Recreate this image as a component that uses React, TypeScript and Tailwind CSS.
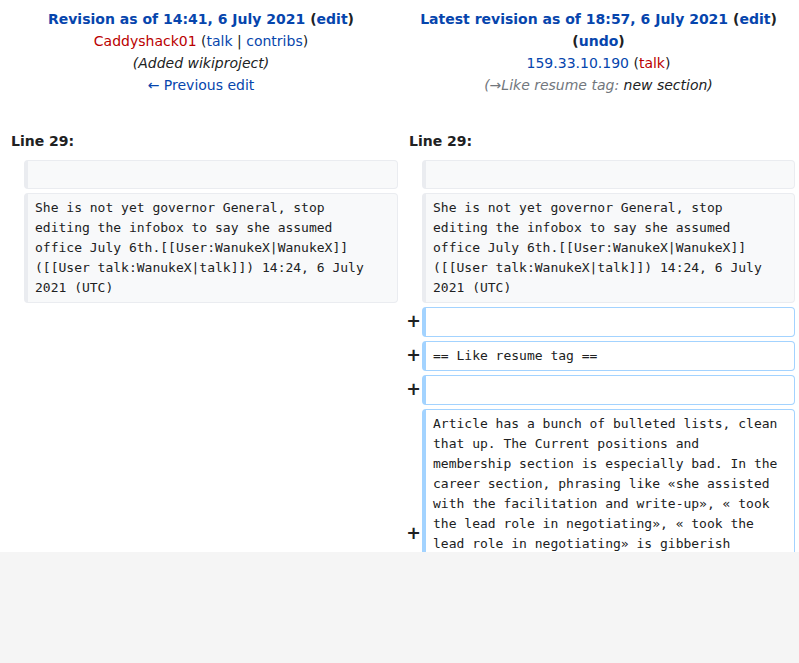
import React from "react";

const sans = { fontFamily: '"DejaVu Sans", "Liberation Sans", sans-serif' };
const mono = { fontFamily: '"DejaVu Sans Mono", "Liberation Mono", monospace' };

const ctxText = `She is not yet governor General, stop
editing the infobox to say she assumed
office July 6th.[[User:WanukeX|WanukeX]]
([[User talk:WanukeX|talk]]) 14:24, 6 July
2021 (UTC)`;

const addedText = `Article has a bunch of bulleted lists, clean
that up. The Current positions and
membership section is especially bad. In the
career section, phrasing like «she assisted
with the facilitation and write-up», « took
the lead role in negotiating», « took the
lead role in negotiating» is gibberish
resume language and should be rewritten in
plain encyclopedic prose. Please also trim
the lists of awards and committees down to
what independent sources actually cover.
~~~~`;

function Context({ text }: { text: string }) {
  return (
    <div
      className={
        "rounded-[4px] border border-l-4 border-[#eaecf0] bg-[#f8f9fa] px-[7px] py-1 text-[13px] leading-5 text-[#202122] whitespace-pre-wrap" +
        (text ? "" : " h-[29px]")
      }
      style={mono}
    >
      {text || "\u00a0"}
    </div>
  );
}

function Added({ text }: { text: string }) {
  return (
    <div
      className="rounded-[4px] border border-l-4 border-[#a3d3ff] bg-white px-[7px] py-1 text-[13px] leading-5 text-[#202122] whitespace-pre-wrap"
      style={mono}
    >
      {text || "\u00a0"}
    </div>
  );
}

function Marker() {
  return (
    <div
      className="flex items-center justify-end -mr-[3px] -mt-[2px] text-[17.5px] leading-5 font-bold text-[#202122]"
      style={sans}
    >
      +
    </div>
  );
}

export default function App() {
  return (
    <div className="h-[663px] bg-[#f5f5f5]" style={sans}>
      <div className="h-[552px] overflow-hidden bg-white">
        <div className="grid grid-cols-[16px_374px_16px_373px] gap-1 px-1 pt-2 text-[14px] text-[#202122]">
          {/* header titles */}
          <div className="col-span-2 text-center leading-[22px]">
            <div className="font-bold">
              <span className="text-[#0645ad]">Revision as of 14:41, 6 July 2021</span> (
              <span className="text-[#0645ad]">edit</span>)
            </div>
            <div>
              <span className="text-[#ba0000]">Caddyshack01</span> (
              <span className="text-[#0645ad]">talk</span> | <span className="text-[#0645ad]">contribs</span>)
            </div>
            <div className="italic">(Added wikiproject)</div>
            <div className="text-[#0645ad]">← Previous edit</div>
          </div>
          <div className="col-span-2 text-center leading-[22px]">
            <div className="font-bold">
              <span className="text-[#0645ad]">Latest revision as of 18:57, 6 July 2021</span> (
              <span className="text-[#0645ad]">edit</span>) (<span className="text-[#0645ad]">undo</span>)
            </div>
            <div>
              <span className="text-[#0645ad]">159.33.10.190</span> (
              <span className="text-[#ba0000]">talk</span>)
            </div>
            <div className="italic">
              <span className="text-[#72777d]">(→Like resume tag:</span> new section)
            </div>
          </div>

          <div className="col-span-2 pl-[7px] pt-[30px] pb-1 font-bold leading-[22px]">Line 29:</div>
          <div className="col-span-2 pl-[7px] pt-[30px] pb-1 font-bold leading-[22px]">Line 29:</div>

          <div />
          <Context text="" />
          <div />
          <Context text="" />

          <div />
          <Context text={ctxText} />
          <div />
          <Context text={ctxText} />

          <div className="col-span-2" />
          <Marker />
          <Added text="" />

          <div className="col-span-2" />
          <Marker />
          <Added text="== Like resume tag ==" />

          <div className="col-span-2" />
          <Marker />
          <Added text="" />

          <div className="col-span-2" />
          <Marker />
          <Added text={addedText} />
        </div>
      </div>
    </div>
  );
}
